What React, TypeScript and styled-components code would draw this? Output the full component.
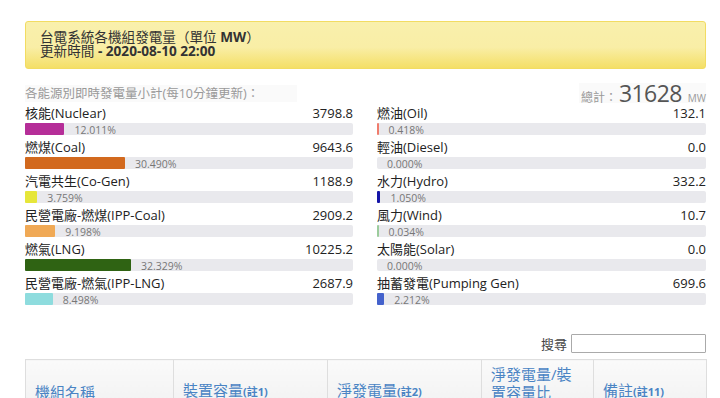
import React from "react";
import styled, { createGlobalStyle } from "styled-components";

const Global = createGlobalStyle`
  html, body { margin: 0; padding: 0; background: #fff; }
  body { font-family: "Open Sans", "Noto Sans CJK TC", sans-serif; color: #333; }
`;

const Page = styled.div`
  padding: 21px 14px 0 25px;
`;

const Notice = styled.div`
  height: 48px;
  box-sizing: border-box;
  border: 1px solid #f2dc62;
  border-radius: 3px;
  background: linear-gradient(to bottom, #f9f0ac 0%, #f9eea6 55%, #f4df66 100%);
  padding: 8px 14px 0 14px;
  font-size: 13.6px;
  line-height: 13.6px;
  color: #333;
`;

const Line = styled.div`
  white-space: nowrap;
`;

const Bold = styled.b`
  font-weight: 700;
`;

const SummaryHead = styled.div`
  display: flex;
  justify-content: space-between;
  align-items: center;
  margin-top: 14px;
  height: 20px;
`;

const Subtitle = styled.div`
  background: #fafafa;
  color: #999;
  font-size: 12.5px;
  line-height: 17px;
  padding-right: 38px;
`;

const Total = styled.div`
  background: #fafafa;
  color: #999;
  font-size: 12px;
  display: flex;
  align-items: baseline;
  line-height: 20px;
  height: 20px;
  padding-left: 2px;
`;

const TotalNum = styled.span`
  font-size: 23px;
  font-weight: 400;
  letter-spacing: -0.6px;
  color: #555;
  margin: 0 6px 0 2px;
  line-height: 20px;
`;

const Unit = styled.span`
  font-size: 10px;
  color: #999;
`;

const Columns = styled.div`
  display: grid;
  grid-template-columns: 328px 1fr;
  column-gap: 24px;
  margin-top: 1px;
`;

const Column = styled.div`
  display: flex;
  flex-direction: column;
`;

const Item = styled.div`
  height: 34px;
`;

const LabelRow = styled.div`
  display: flex;
  justify-content: space-between;
  font-size: 13px;
  line-height: 19px;
  color: #222;
`;

const Track = styled.div`
  height: 12px;
  background: #e9e9ed;
  border-radius: 2px;
  display: flex;
  align-items: center;
`;

const Fill = styled.div<{ $color: string }>`
  height: 100%;
  background: ${(p) => p.$color};
  flex: none;
  border-radius: 1px;
`;

const Pct = styled.span`
  font-size: 10.5px;
  color: #777;
  margin-left: 10px;
  line-height: 12px;
  padding-top: 2px;
`;

const SearchRow = styled.div`
  display: flex;
  justify-content: flex-end;
  align-items: center;
  gap: 4px;
  margin-top: 26px;
  font-size: 13px;
  color: #444;
`;

const SearchInput = styled.input`
  width: 135px;
  height: 19px;
  box-sizing: border-box;
  border: 1px solid #aaa;
  border-radius: 1px;
  padding: 0 4px;
`;

const Table = styled.table`
  margin-top: 6px;
  width: 100%;
  border-collapse: collapse;
  table-layout: fixed;
`;

const Th = styled.th<{ $w: number }>`
  width: ${(p) => p.$w}px;
  text-align: left;
  vertical-align: bottom;
  font-weight: 400;
  font-size: 15px;
  line-height: 18px;
  color: #4a84c4;
  border: 1px solid #dedede;
  background: linear-gradient(to bottom, #fafafa 0%, #f2f2f2 100%);
  padding: 4px 9px 4px 9px;
  height: 46px;
  box-sizing: border-box;
`;

const Note = styled.small`
  font-size: 11px;
  font-weight: 700;
`;

type Src = { name: string; value: string; pct: number; color: string };

const left: Src[] = [
  { name: "核能(Nuclear)", value: "3798.8", pct: 12.011, color: "#b52e98" },
  { name: "燃煤(Coal)", value: "9643.6", pct: 30.49, color: "#d2691e" },
  { name: "汽電共生(Co-Gen)", value: "1188.9", pct: 3.759, color: "#e6e63a" },
  { name: "民營電廠-燃煤(IPP-Coal)", value: "2909.2", pct: 9.198, color: "#f0a955" },
  { name: "燃氣(LNG)", value: "10225.2", pct: 32.329, color: "#2f6313" },
  { name: "民營電廠-燃氣(IPP-LNG)", value: "2687.9", pct: 8.498, color: "#8edcde" },
];

const right: Src[] = [
  { name: "燃油(Oil)", value: "132.1", pct: 0.418, color: "#f07c6c" },
  { name: "輕油(Diesel)", value: "0.0", pct: 0, color: "#888" },
  { name: "水力(Hydro)", value: "332.2", pct: 1.05, color: "#1515a8" },
  { name: "風力(Wind)", value: "10.7", pct: 0.034, color: "#9ccc9c" },
  { name: "太陽能(Solar)", value: "0.0", pct: 0, color: "#888" },
  { name: "抽蓄發電(Pumping Gen)", value: "699.6", pct: 2.212, color: "#4462cc" },
];

function Bar({ s, width }: { s: Src; width: number }) {
  const w = s.pct === 0 ? 0 : Math.max(1.5, (width * s.pct) / 100);
  return (
    <Item>
      <LabelRow>
        <span>{s.name}</span>
        <span>{s.value}</span>
      </LabelRow>
      <Track>
        <Fill $color={s.color} style={{ width: w }} />
        <Pct>{s.pct.toFixed(3)}%</Pct>
      </Track>
    </Item>
  );
}

export default function App() {
  return (
    <>
      <Global />
      <Page>
        <Notice>
          <Line>
            台電系統各機組發電量（單位 <Bold>MW</Bold>）
          </Line>
          <Line>
            更新時間 <Bold>- 2020-08-10 22:00</Bold>
          </Line>
        </Notice>
        <SummaryHead>
          <Subtitle>各能源別即時發電量小計(每10分鐘更新)：</Subtitle>
          <Total>
            總計：<TotalNum>31628</TotalNum>
            <Unit>MW</Unit>
          </Total>
        </SummaryHead>
        <Columns>
          <Column>
            {left.map((s) => (
              <Bar key={s.name} s={s} width={328} />
            ))}
          </Column>
          <Column>
            {right.map((s) => (
              <Bar key={s.name} s={s} width={329} />
            ))}
          </Column>
        </Columns>
        <SearchRow>
          搜尋
          <SearchInput type="text" />
        </SearchRow>
        <Table>
          <thead>
            <tr>
              <Th $w={148}>機組名稱</Th>
              <Th $w={154}>
                裝置容量<Note>(註1)</Note>
              </Th>
              <Th $w={154}>
                淨發電量<Note>(註2)</Note>
              </Th>
              <Th $w={112}>淨發電量/裝置容量比</Th>
              <Th $w={113}>
                備註<Note>(註11)</Note>
              </Th>
            </tr>
          </thead>
        </Table>
      </Page>
    </>
  );
}
